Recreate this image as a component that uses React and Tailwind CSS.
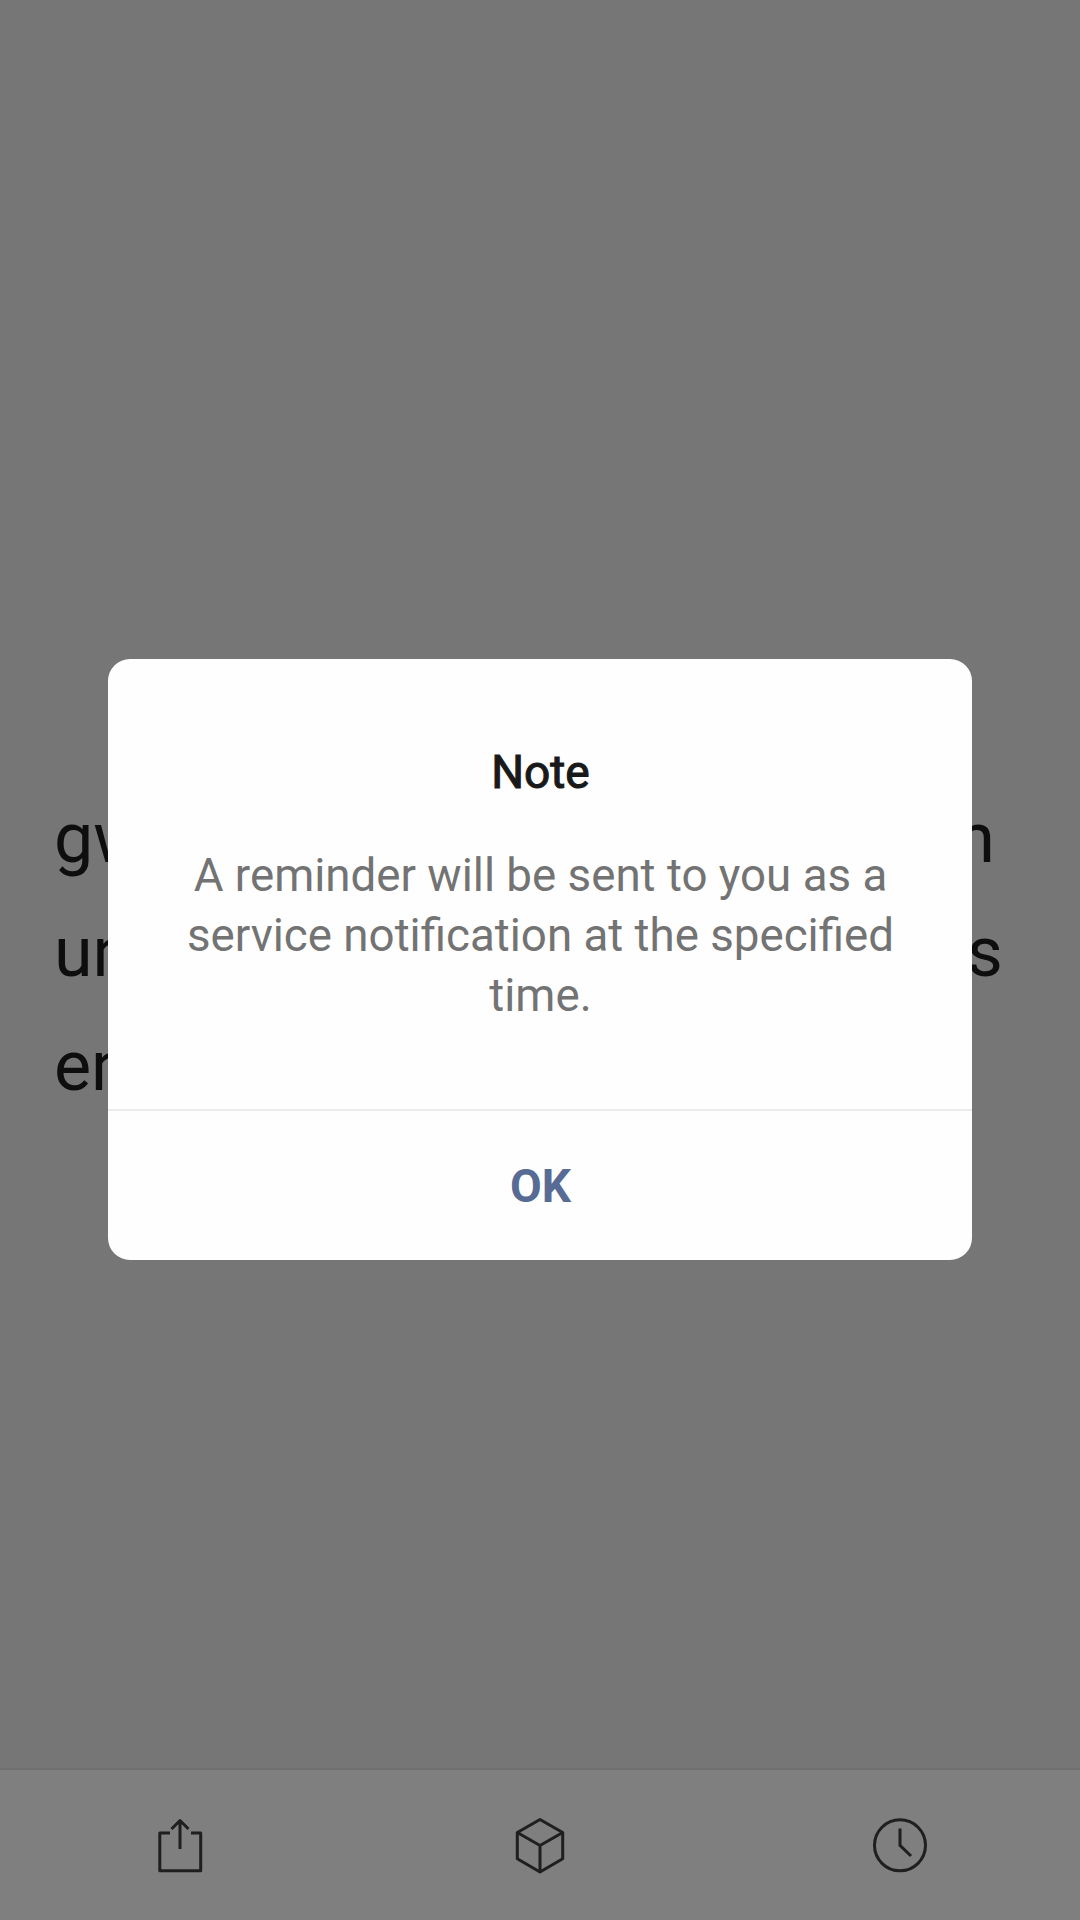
export default function App() {
  return (
    <div className="relative flex h-[1920px] w-[1080px] flex-col overflow-hidden bg-[#767676] font-['Roboto',sans-serif]">
      <main className="flex grow flex-col pl-[54px] pr-[53px] pt-[781px] text-[70px] leading-[114px] text-[#0e0e0e]">
        <div className="flex justify-between"><span>gw</span><span className="mr-[32px]">n</span></div>
        <div className="flex justify-between"><span>un</span><span className="mr-[24px]">s</span></div>
        <div>en</div>
      </main>
      <footer className="grid h-[152px] shrink-0 grid-cols-3 items-center justify-items-center border-t-2 border-[#707070] bg-[#7f7f7f] text-[#1f1f1f]">
        <svg className="size-[60px]" viewBox="0 0 60 60" fill="none" stroke="currentColor" strokeWidth="3" strokeLinejoin="round"><path d="M20 18H9.800v37.700h40.900V18H41M30 34V5.500M21.500 14L30 5.500l8.500 8.500" /></svg>
        <svg className="size-[60px]" viewBox="0 0 60 60" fill="none" stroke="currentColor" strokeWidth="3" strokeLinejoin="round"><path d="M30 4.500l22.700 13v26.300L30 57 7.300 43.800V17.500zM7.300 17.500L30 30.500l22.700-13M30 30.500V57" /></svg>
        <svg className="size-[60px]" viewBox="0 0 60 60" fill="none" stroke="currentColor" strokeWidth="3"><circle cx="30" cy="30.300" r="25.500" /><path d="M30 13.500v16.800l11 10.700" /></svg>
      </footer>
      <section className="absolute left-[108px] top-[659px] flex h-[601px] w-[864px] flex-col rounded-[22px] bg-[#fefefe] text-center">
        <div className="h-[450px] pt-[83px]">
          <h1 className="pl-px text-[46px] font-normal leading-[60px] text-[#191919] [-webkit-text-stroke:1.1px_#191919]">Note</h1>
          <p className="mt-[44px] pl-px text-[45.7px] leading-[60px] text-[#737373]">A reminder will be sent to you as a<br />service notification at the specified<br />time.</p>
        </div>
        <button className="grow border-t-2 border-[#ebebeb] pl-px pt-[2px] text-[46px] font-bold text-[#576b95]">OK</button>
      </section>
    </div>
  );
}
